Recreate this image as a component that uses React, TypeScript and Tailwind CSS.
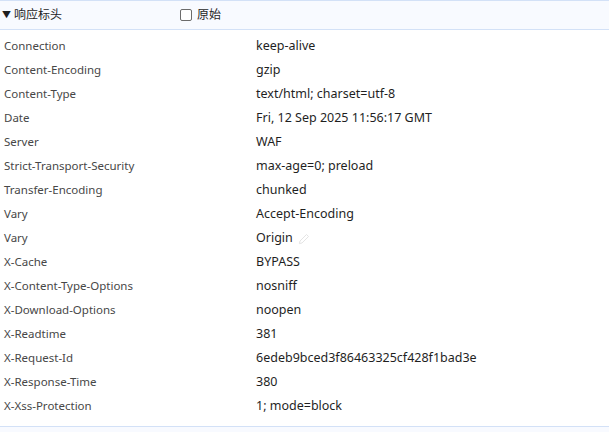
import React from "react";

const rows: [string, string][] = [
  ["Connection", "keep-alive"],
  ["Content-Encoding", "gzip"],
  ["Content-Type", "text/html; charset=utf-8"],
  ["Date", "Fri, 12 Sep 2025 11:56:17 GMT"],
  ["Server", "WAF"],
  ["Strict-Transport-Security", "max-age=0; preload"],
  ["Transfer-Encoding", "chunked"],
  ["Vary", "Accept-Encoding"],
  ["Vary", "Origin"],
  ["X-Cache", "BYPASS"],
  ["X-Content-Type-Options", "nosniff"],
  ["X-Download-Options", "noopen"],
  ["X-Readtime", "381"],
  ["X-Request-Id", "6edeb9bced3f86463325cf428f1bad3e"],
  ["X-Response-Time", "380"],
  ["X-Xss-Protection", "1; mode=block"],
];

export default function App() {
  return (
    <div
      className="w-[609px] h-[432px] bg-white overflow-hidden"
      style={{ fontFamily: '"Noto Sans", "Noto Sans CJK SC", sans-serif' }}
    >
      <div className="h-[30px] bg-[#f8faff] border-t border-b border-[#d3e1f7] flex items-center">
        <div className="w-[176px] flex items-center pl-[2px] text-[12px] text-[#1f1f1f]">
          <span className="text-[9px] mr-[3px]">▼</span>
          <span>响应标头</span>
        </div>
        <div className="flex items-center text-[12px] text-[#1f1f1f]">
          <span className="w-[12px] h-[12px] border border-[#6b6b6b] rounded-[2px] bg-white ml-[4px] mr-[5px]"></span>
          <span>原始</span>
        </div>
      </div>
      <div className="pt-[4px] pb-[8px] border-b border-[#d3e1f7]">
        {rows.map(([k, v], i) => (
          <div key={i} className="h-[24px] flex items-center">
            <div className="w-[256px] shrink-0 pl-[4px] text-[11.5px] text-[#474747] whitespace-nowrap">{k}</div>
            <div className="flex items-center text-[12.5px] text-[#1f1f1f] whitespace-nowrap">
              <span>{v}</span>
              {k === "Vary" && v === "Origin" && (
                <svg width="14" height="14" viewBox="0 0 14 14" className="ml-[4px] mt-[2px]">
                  <path
                    d="M9.5 2.5l2 2L5 11l-2.6.6L3 9z"
                    fill="none"
                    stroke="#e4e4e4"
                    strokeWidth="1"
                    strokeLinejoin="round"
                  />
                </svg>
              )}
            </div>
          </div>
        ))}
      </div>
      <div className="bg-[#f8faff] h-[10px]"></div>
    </div>
  );
}
